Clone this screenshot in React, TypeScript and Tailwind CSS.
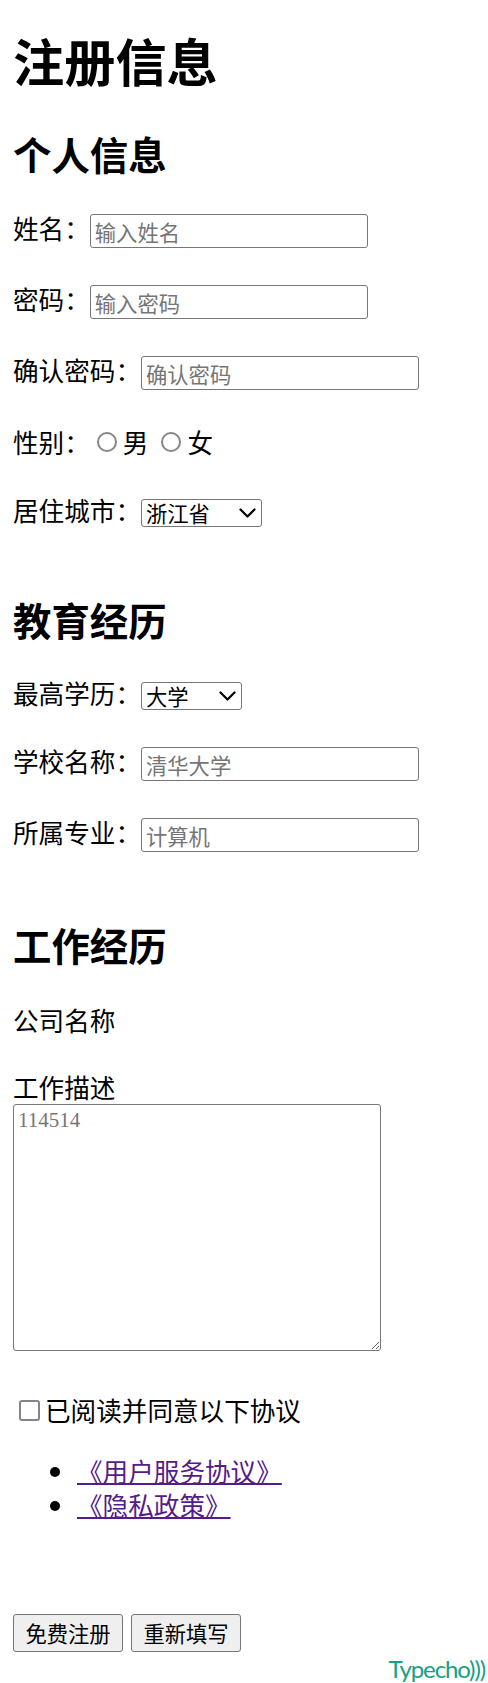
import React from 'react'

function Chevron() {
	return (
		<svg width="17" height="10" viewBox="0 0 17 10" fill="none">
			<path d="M1.5 1.5 L8.5 8.5 L15.5 1.5" stroke="#000" strokeWidth="2.2" strokeLinecap="round" strokeLinejoin="round" />
		</svg>
	)
}

function TextField({ label, placeholder, className }: { label: string; placeholder: string; className: string }) {
	return (
		<div className={`flex items-center h-[34px] ${className}`}>
			<span className="leading-[34px] mb-[6px] whitespace-nowrap">{label}</span>
			<input
				type="text"
				placeholder={placeholder}
				className="w-[278px] h-[34px] border border-[#767676] rounded-[3px] px-[4px] text-[21.3px] outline-none placeholder:text-[#757575]"
			/>
		</div>
	)
}

function SelectBox({ value, width }: { value: string; width: string }) {
	return (
		<div className={`flex items-center justify-between h-[28px] border border-[#767676] rounded-[3px] pl-[4px] pr-[5px] text-[21.3px] leading-[26px] ${width}`}>
			<span>{value}</span>
			<Chevron />
		</div>
	)
}

export default function App() {
	return (
		<div className="min-h-screen bg-white text-black flex flex-col pl-[13px] text-[25.6px] font-['Noto_Sans_CJK_SC','Noto_Sans',sans-serif]">
			<h1 className="mt-[26px] leading-[68px] text-[51.2px] font-bold">注册信息</h1>

			<h2 className="mt-[34px] leading-[50px] text-[38.4px] font-bold">个人信息</h2>
			<TextField label="姓名：" placeholder="输入姓名" className="mt-[36px]" />
			<TextField label="密码：" placeholder="输入密码" className="mt-[37px]" />
			<TextField label="确认密码：" placeholder="确认密码" className="mt-[37px]" />

			<div className="mt-[35px] flex items-center h-[34px] leading-[34px]">
				<span>性别：</span>
				<span className="ml-[7px] shrink-0 w-[20px] h-[20px] rounded-full border-2 border-[#858585]" />
				<span className="ml-[6px]">男</span>
				<span className="ml-[13px] shrink-0 w-[20px] h-[20px] rounded-full border-2 border-[#858585]" />
				<span className="ml-[6px]">女</span>
			</div>

			<div className="mt-[40px] flex items-center h-[28px]">
				<span className="leading-[34px] mb-[6px]">居住城市：</span>
				<SelectBox value="浙江省" width="w-[121px]" />
			</div>

			<h2 className="mt-[67px] leading-[50px] text-[38.4px] font-bold">教育经历</h2>
			<div className="mt-[38px] flex items-center h-[28px]">
				<span className="leading-[34px] mb-[6px]">最高学历：</span>
				<SelectBox value="大学" width="w-[101px]" />
			</div>
			<TextField label="学校名称：" placeholder="清华大学" className="mt-[37px]" />
			<TextField label="所属专业：" placeholder="计算机" className="mt-[37px]" />

			<h2 className="mt-[67px] leading-[50px] text-[38.4px] font-bold">工作经历</h2>
			<div className="mt-[34px] leading-[34px]">公司名称</div>
			<div className="mt-[33px] leading-[34px]">工作描述</div>
			<textarea
				placeholder="114514"
				className="w-[368px] h-[247px] border border-[#767676] rounded-[3px] px-[4px] pt-[3px] text-[21px] leading-[24px] font-['Liberation_Serif',serif] outline-none placeholder:text-[#757575]"
			/>

			<div className="mt-[42px] flex items-center h-[34px] leading-[34px]">
				<span className="ml-[6px] shrink-0 w-[21px] h-[21px] rounded-[3px] border-2 border-[#858585]" />
				<span className="ml-[5px]">已阅读并同意以下协议</span>
			</div>

			<ul className="mt-[27px] pl-[64px] list-disc leading-[34px]">
				<li>
					<a href="#" className="text-[#551a8b] underline decoration-[1.5px]">《用户服务协议》</a>
				</li>
				<li>
					<a href="#" className="text-[#551a8b] underline decoration-[1.5px]">《隐私政策》</a>
				</li>
			</ul>

			<div className="mt-[92px] flex gap-[8px]">
				<button type="button" className="w-[110px] h-[38px] bg-[#efefef] border border-[#767676] rounded-[3px] text-[21.3px]">
					免费注册
				</button>
				<button type="button" className="w-[110px] h-[38px] bg-[#efefef] border border-[#767676] rounded-[3px] text-[21.3px]">
					重新填写
				</button>
			</div>

			<div className="mt-[5px] self-end mr-[3px] leading-[24px] text-[24px] tracking-[-1.1px] text-[#16a085] font-['Lato',sans-serif]">
				Typecho)))
			</div>
		</div>
	)
}
